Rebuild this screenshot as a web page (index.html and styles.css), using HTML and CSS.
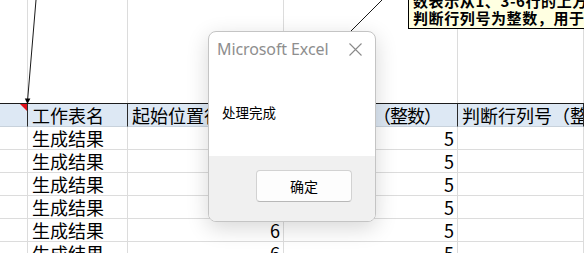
FILE: index.html
```html
<!DOCTYPE html>
<html lang="zh-CN">
<head>
<meta charset="utf-8">
<title>Microsoft Excel</title>
<link rel="stylesheet" href="styles.css">
</head>
<body>
<div class="sheet">
  <div class="c top"></div><div class="c top"></div><div class="c top"></div><div class="c top"></div><div class="c top"></div>

  <div class="c hd first"><span class="flag"></span></div>
  <div class="c hd">工作表名</div>
  <div class="c hd">起始位置行号</div>
  <div class="c hd tight">起始行列号（整数）</div>
  <div class="c hd">判断行列号（整数）</div>

  <div class="c"></div><div class="c">生成结果</div><div class="c num">6</div><div class="c num">5</div><div class="c"></div>
  <div class="c"></div><div class="c">生成结果</div><div class="c num">6</div><div class="c num">5</div><div class="c"></div>
  <div class="c"></div><div class="c">生成结果</div><div class="c num">6</div><div class="c num">5</div><div class="c"></div>
  <div class="c"></div><div class="c">生成结果</div><div class="c num">6</div><div class="c num">5</div><div class="c"></div>
  <div class="c"></div><div class="c">生成结果</div><div class="c num">6</div><div class="c num">5</div><div class="c"></div>
  <div class="c"></div><div class="c">生成结果</div><div class="c num">6</div><div class="c num">5</div><div class="c"></div>
</div>

<svg class="arrows" width="584" height="253" viewBox="0 0 584 253">
  <line x1="36" y1="0" x2="27.6" y2="100" stroke="#1a1a1a" stroke-width="1"/>
  <polygon points="24.8,98.5 30.4,98.5 27.5,104" fill="#000"/>
  <line x1="390" y1="-8" x2="290" y2="92" stroke="#1a1a1a" stroke-width="1"/>
</svg>

<div class="note">
  <div class="note-line">数表示从1、3-6行的上方</div>
  <div class="note-line">判断行列号为整数，用于</div>
</div>

<div class="dialog">
  <div class="dlg-title">
    <span class="dlg-name">Microsoft Excel</span>
    <svg class="dlg-close" width="13" height="13" viewBox="0 0 13 13">
      <path d="M0.5 0.5 L12.5 12.5 M12.5 0.5 L0.5 12.5" stroke="#8a8a8a" stroke-width="1.1" fill="none"/>
    </svg>
  </div>
  <div class="dlg-body">处理完成</div>
  <div class="dlg-foot">
    <button class="dlg-btn">确定</button>
  </div>
</div>
</body>
</html>
```
FILE: styles.css
```css
html, body {
  margin: 0;
  padding: 0;
  width: 584px;
  height: 253px;
  overflow: hidden;
  background: #fff;
}

body {
  position: relative;
  font-family: "Noto Sans CJK SC", "Noto Sans", sans-serif;
}

.sheet {
  display: grid;
  grid-template-columns: 28px 100px 156px 174px 1fr;
  grid-template-rows: 103px 24px repeat(6, 23px);
  font-size: 18px;
  color: #000;
}

.c {
  box-sizing: border-box;
  border-right: 1px solid #dcdcdc;
  border-bottom: 1px solid #dcdcdc;
  padding-left: 4px;
  line-height: 22px;
  white-space: nowrap;
  overflow: hidden;
}

.c.top {
  border-bottom: none;
}

.c.hd {
  position: relative;
  background: #dde8f4;
  border-top: 1px solid #1c1c1c;
  border-right: 1px solid #2a2a2a;
  border-bottom: 1px solid #c8d2dc;
  line-height: 22px;
  overflow: hidden;
}

.c.hd.tight {
  letter-spacing: -1px;
}

.c.num {
  text-align: right;
  padding-left: 0;
  padding-right: 3px;
}

.flag {
  position: absolute;
  top: 0;
  right: 0;
  width: 0;
  height: 0;
  border-top: 7px solid #e0101a;
  border-left: 7px solid transparent;
}

.arrows {
  position: absolute;
  left: 0;
  top: 0;
  pointer-events: none;
}

.note {
  position: absolute;
  left: 408px;
  top: -10px;
  width: 220px;
  box-sizing: border-box;
  background: #ffffe1;
  border: 1px solid #000;
  padding: 1px 4px 2px 4px;
  font-family: "Noto Sans CJK SC", sans-serif;
  font-weight: 700;
  font-size: 15px;
  line-height: 17px;
  color: #000;
  white-space: nowrap;
  letter-spacing: 0.6px;
}

.dialog {
  position: absolute;
  left: 208px;
  top: 31px;
  width: 168px;
  height: 191px;
  box-sizing: border-box;
  border: 1px solid #c4c4c4;
  border-radius: 8px;
  background: #fff;
  box-shadow: 0 6px 22px rgba(0, 0, 0, 0.16);
  display: flex;
  flex-direction: column;
  overflow: hidden;
}

.dlg-title {
  display: flex;
  align-items: center;
  justify-content: space-between;
  padding: 2px 13px 0 8px;
  height: 30px;
}

.dlg-name {
  font-family: "Noto Sans", sans-serif;
  font-size: 16px;
  color: #8e8e8e;
  letter-spacing: -0.1px;
}

.dlg-close {
  display: block;
}

.dlg-body {
  flex: 1;
  padding: 39px 0 0 13px;
  font-size: 13.5px;
  color: #000;
  line-height: 18px;
}

.dlg-foot {
  height: 65px;
  background: #f0f0f0;
  display: flex;
  justify-content: flex-end;
  align-items: flex-start;
  padding: 14px 23px 0 0;
  box-sizing: border-box;
}

.dlg-btn {
  width: 96px;
  height: 32px;
  box-sizing: border-box;
  background: #fdfdfd;
  border: 1px solid #d2d2d2;
  border-bottom-color: #b8b8b8;
  border-radius: 4px;
  font-family: "Noto Sans CJK SC", sans-serif;
  font-size: 14px;
  color: #000;
  padding: 0;
}
```
